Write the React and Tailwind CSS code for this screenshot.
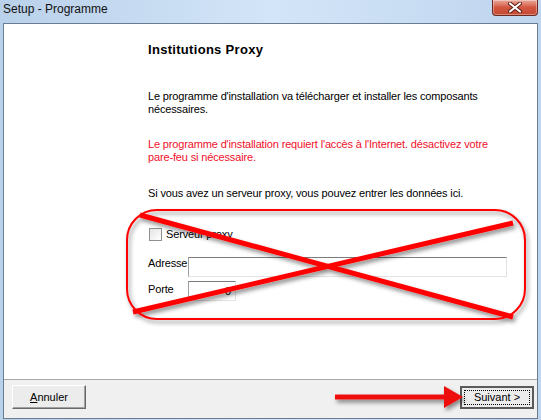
export default function App() {
  return (
    <div className="relative w-[541px] h-[420px] overflow-hidden bg-gradient-to-r from-[#b9d1ea] via-[#d3e5f8] to-[#bfd5ee] font-['Liberation_Sans',sans-serif] text-black">
      {/* barre de titre */}
      <div className="h-[23px] flex items-start justify-between pl-[3px] pr-[3px]">
        <span className="mt-[2px] text-[12px] leading-[15px] text-[#111]">Setup - Programme</span>
        <div className="w-[46px] h-[16px] rounded-b-[4px] border border-t-0 border-[#6e2a22] bg-gradient-to-b from-[#e9a99c] via-[#d2553f] to-[#c44a33] flex items-center justify-center shadow-[inset_0_0_0_1px_rgba(255,255,255,0.35)]">
          <svg width="14" height="11" viewBox="0 0 14 11">
            <path d="M2 1.5 L12 9.5 M12 1.5 L2 9.5" stroke="#5a1a12" strokeWidth="4" strokeLinecap="round" />
            <path d="M2 1.5 L12 9.5 M12 1.5 L2 9.5" stroke="#ffffff" strokeWidth="2.2" strokeLinecap="round" />
          </svg>
        </div>
      </div>

      {/* fenêtre */}
      <div className="mx-[3px] h-[396px] border border-[#6b7c92] flex flex-col">
        <div className="h-[355px] bg-white pl-[144px] text-[11px] tracking-[-0.15px]">
          <div className="mt-[18px] text-[13px] leading-[16px] font-bold tracking-[0.3px]">Institutions Proxy</div>
          <p className="mt-[32px] leading-[13px] whitespace-nowrap">
            Le programme d'installation va télécharger et installer les composants
            <br />
            nécessaires.
          </p>
          <p className="mt-[22px] leading-[13px] whitespace-nowrap text-[#f0102a]">
            Le programme d'installation requiert l'accès à l'Internet. désactivez votre
            <br />
            pare-feu si nécessaire.
          </p>
          <p className="mt-[23px] leading-[13px] whitespace-nowrap">
            Si vous avez un serveur proxy, vous pouvez entrer les données ici.
          </p>

          <div className="mt-[27px] h-[14px] flex items-center gap-[4px] ml-[1px]">
            <div className="w-[13px] h-[13px] border border-[#8e8f8f] bg-gradient-to-br from-[#e4e4e4] to-white" />
            <span className="leading-[14px]">Serveur proxy</span>
          </div>

          <div className="mt-[16px] flex items-start">
            <span className="w-[40px] leading-[13px]">Adresse</span>
            <div className="w-[319px] h-[20px] border border-t-[#7a7a7a] border-l-[#a0a0a0] border-b-[#e3e3e3] border-r-[#e3e3e3] bg-white" />
          </div>

          <div className="mt-[4px] flex items-start">
            <span className="w-[40px] pt-[2px] leading-[13px]">Porte</span>
            <div className="w-[48px] h-[20px] border border-t-[#7a7a7a] border-l-[#a0a0a0] border-b-[#e3e3e3] border-r-[#e3e3e3] bg-white flex items-center justify-end pr-[4px] leading-[13px]">
              0
            </div>
          </div>
        </div>

        <div className="flex-1 bg-[#f0f0f0] border-t border-[#a9a9a9] flex items-start justify-between pl-[8px] pr-[3px]">
          <button className="mt-[5px] w-[74px] h-[24px] bg-[#ececec] border border-t-white border-l-white border-b-[#696969] border-r-[#696969] shadow-[inset_-1px_-1px_0_#a0a0a0] text-[11px] leading-[13px]">
            <span className="underline">A</span>nnuler
          </button>
          <button className="mt-[6px] w-[74px] h-[23px] bg-[#ececec] border-2 border-[#5a5a5a] text-[11px] leading-[13px] p-[2px]">
            <span className="flex w-full h-full items-center justify-center border border-dotted border-black">
              Suivant &gt;
            </span>
          </button>
        </div>
      </div>

      {/* annotations */}
      <svg className="absolute left-0 top-0 pointer-events-none" width="541" height="420" viewBox="0 0 541 420">
        <defs>
          <filter id="ombre" x="-10%" y="-10%" width="120%" height="130%">
            <feDropShadow dx="2" dy="3" stdDeviation="2" floodColor="#000" floodOpacity="0.45" />
          </filter>
        </defs>
        <g filter="url(#ombre)">
          <rect x="127" y="210" width="398" height="109" rx="30" ry="30" fill="none" stroke="#ff0000" strokeWidth="2" />
          <line x1="140" y1="215" x2="513" y2="317" stroke="#ff0000" strokeWidth="5" />
          <line x1="133" y1="312" x2="513" y2="223" stroke="#ff0000" strokeWidth="5" />
        </g>
        <g filter="url(#ombre)">
          <line x1="335" y1="397" x2="448" y2="397" stroke="#ee1111" strokeWidth="5" />
          <polygon points="444,386 463,397 444,408" fill="#ee1111" />
        </g>
      </svg>
    </div>
  );
}
